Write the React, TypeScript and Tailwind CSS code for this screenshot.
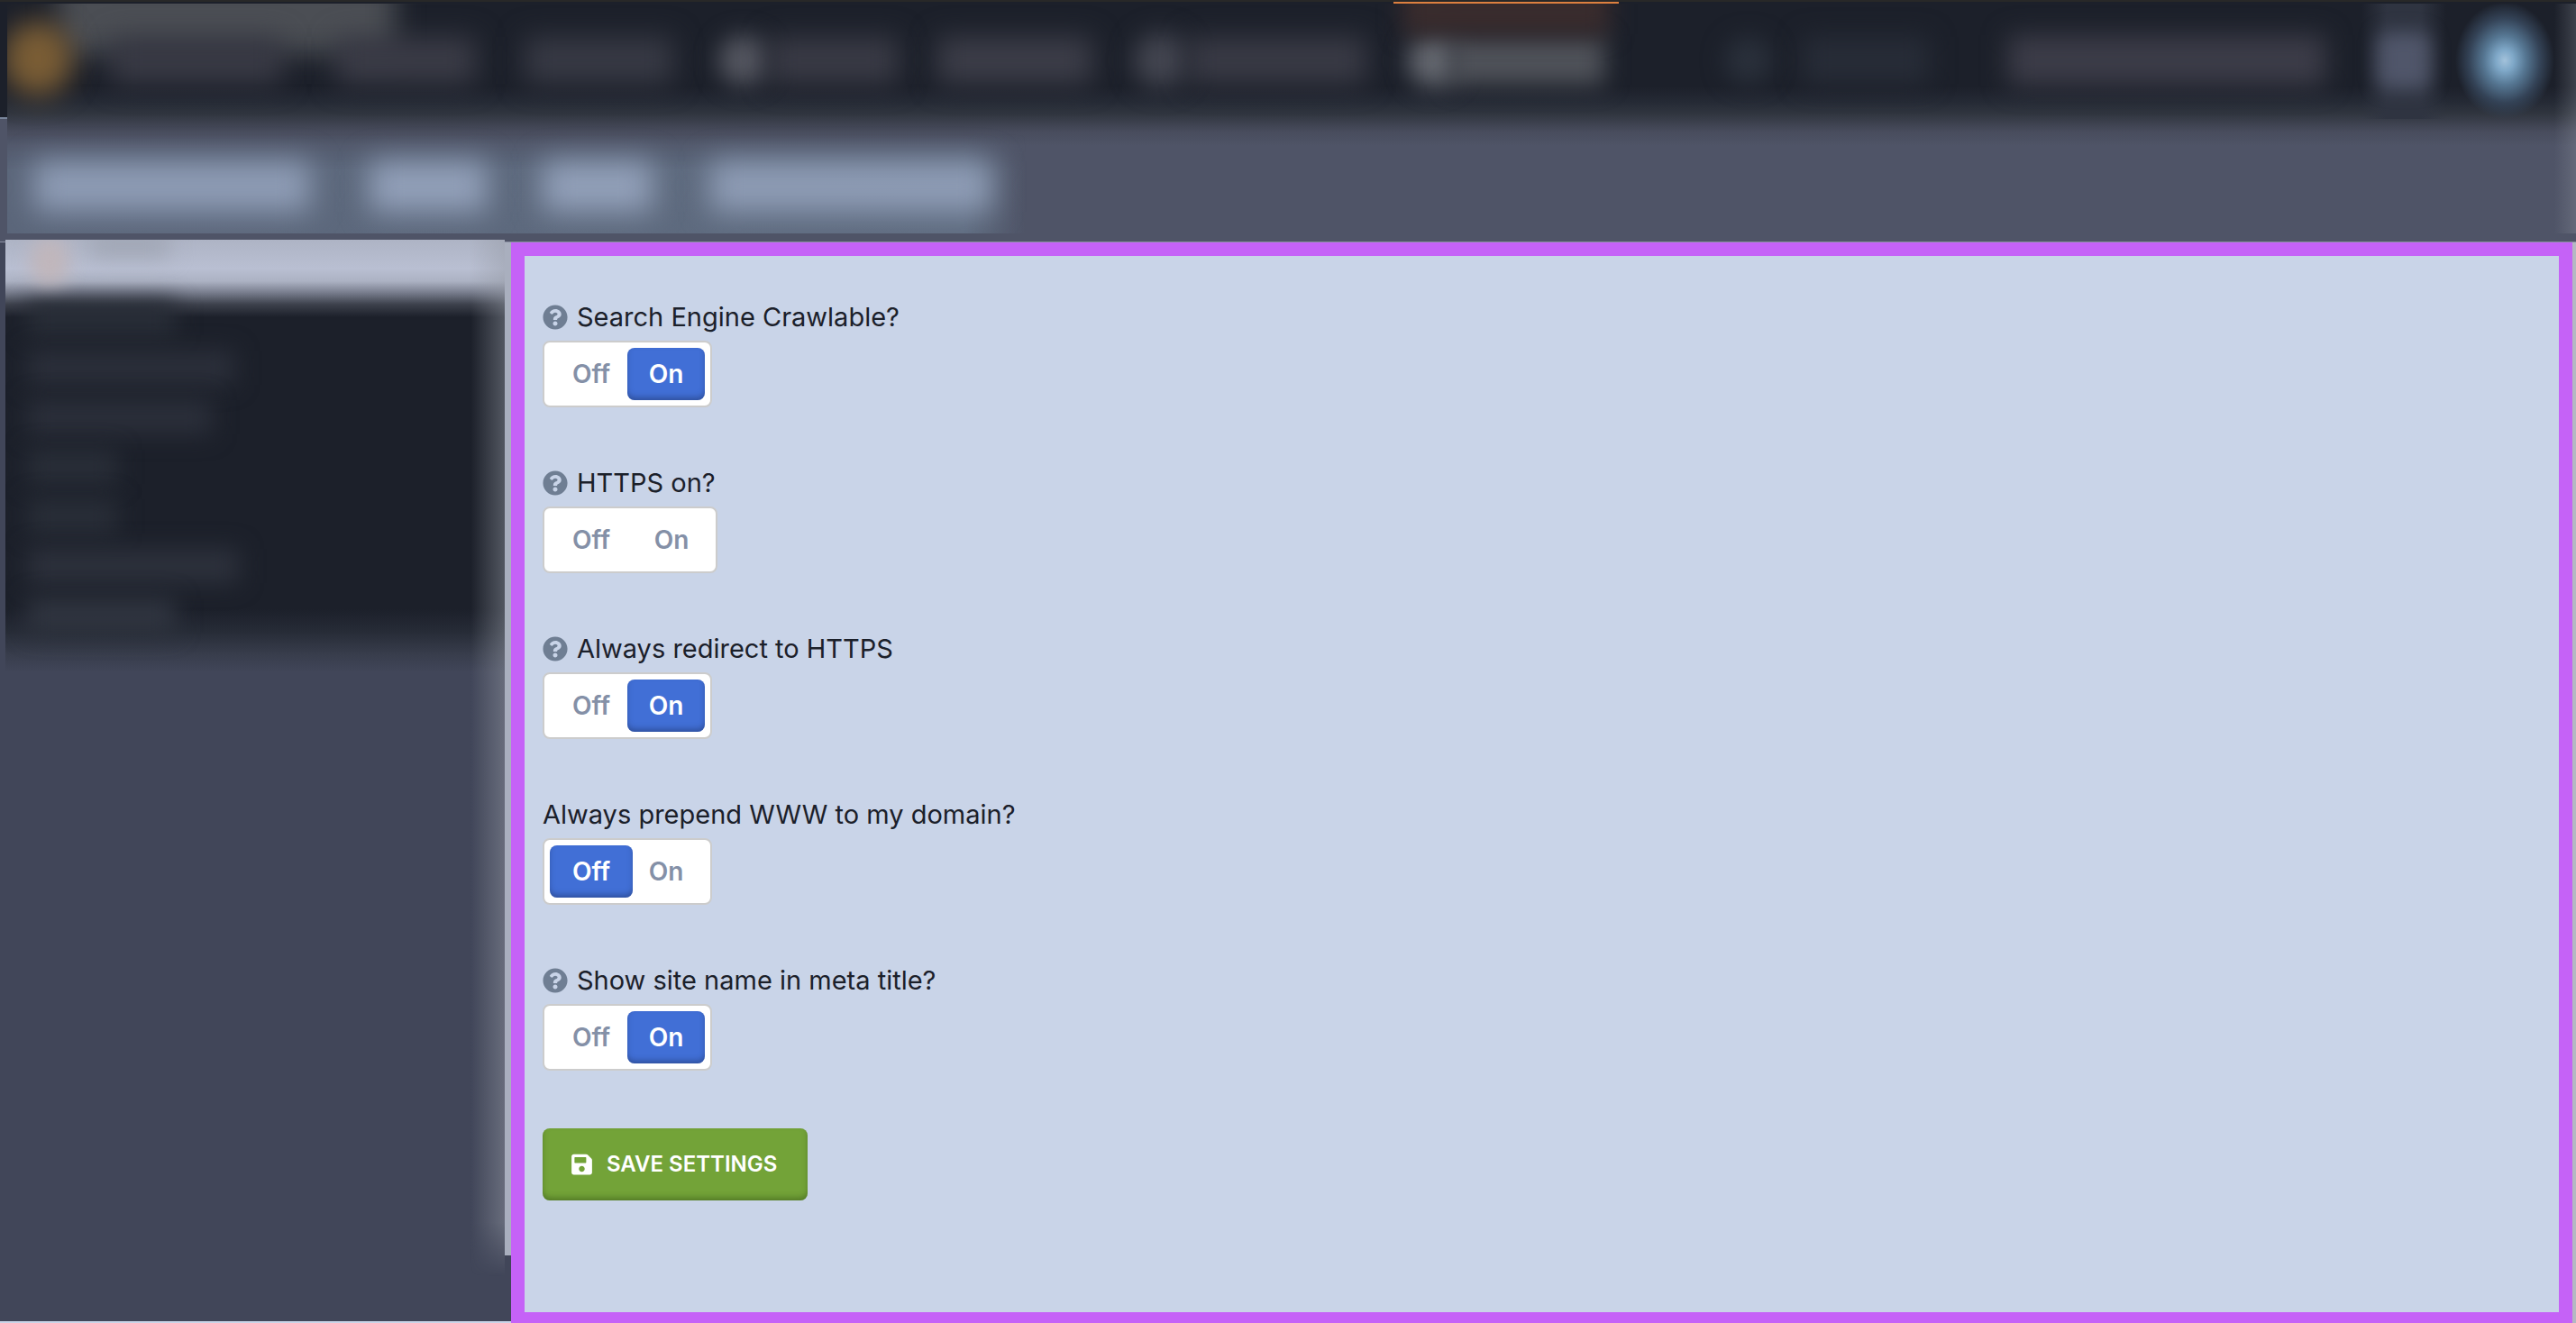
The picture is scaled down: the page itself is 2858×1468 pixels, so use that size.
import { useState } from "react";
import { FaQuestionCircle, FaSave } from "react-icons/fa";

type Choice = "off" | "on" | null;

const settings: { id: string; label: string; help: boolean; initial: Choice }[] = [
  { id: "crawlable", label: "Search Engine Crawlable?", help: true, initial: "on" },
  { id: "https", label: "HTTPS on?", help: true, initial: null },
  { id: "redirect", label: "Always redirect to HTTPS", help: true, initial: "on" },
  { id: "www", label: "Always prepend WWW to my domain?", help: false, initial: "off" },
  { id: "metaTitle", label: "Show site name in meta title?", help: true, initial: "on" },
];

function Option({
  group,
  text,
  checked,
  className,
  onSelect,
}: {
  group: string;
  text: string;
  checked: boolean;
  className: string;
  onSelect: () => void;
}) {
  return (
    <label className={`cursor-pointer ${className}`}>
      <input type="radio" name={group} checked={checked} onChange={onSelect} className="peer sr-only" />
      <span className="flex h-[58px] items-center justify-center rounded-lg text-[28px] font-semibold text-[#8490a7] peer-checked:bg-[#416fd6] peer-checked:text-white peer-checked:shadow-[inset_0_-4px_6px_-1px_rgba(30,50,100,0.5)]">
        {text}
      </span>
    </label>
  );
}

function Setting({ id, label, help, initial }: (typeof settings)[number]) {
  const [value, setValue] = useState<Choice>(initial);
  return (
    <fieldset className="relative">
      <legend className="flex h-9 items-center gap-[10px] text-[29px] text-[#1b202a]">
        {help && <FaQuestionCircle className="size-[28px] text-[#6f7e93]" aria-hidden="true" />}
        {label}
      </legend>
      <div className="mt-2 flex w-fit rounded-lg border-2 border-[#cccccc] bg-white p-1.5">
        <Option group={id} text="Off" checked={value === "off"} className="w-[92px]" onSelect={() => setValue("off")} />
        <Option
          group={id}
          text="On"
          checked={value === "on"}
          className={value === null ? "w-[86px]" : "-ml-1.5 w-[86px]"}
          onSelect={() => setValue("on")}
        />
      </div>
    </fieldset>
  );
}

function Header() {
  return (
    <header className="relative h-[268px] overflow-hidden bg-[#4f5467]">
      <div className="h-[132px] w-2 border-b-2 border-[#79859b] bg-[#1c202a]" />
      <div
        aria-hidden="true"
        className="absolute inset-x-0 top-1 bottom-[9px] left-2 overflow-hidden bg-[linear-gradient(#1c202a_0px,#1c202a_92px,#242934_108px,#30353f_122px,#484c5d_142px,#4f5467_158px)]"
      >
        <div className="absolute top-[-30px] left-[56px] h-[86px] w-[374px] bg-[#4b4e54] blur-[15px]" />
        <div className="absolute top-[20px] left-[-4px] h-[82px] w-[76px] rounded-full bg-[#7a5d35] blur-[15px]" />
        <div className="flex h-[126px] items-center">
          <div className="ml-[115px] h-[52px] w-[190px] bg-[#383944] blur-[15px]" />
          <div className="ml-[60px] h-[52px] w-[155px] bg-[#3a3b46] blur-[15px]" />
          <div className="ml-[54px] h-[52px] w-[165px] bg-[#373944] blur-[15px]" />
          <div className="ml-[50px] size-[56px] rounded-full bg-[#545660] blur-[13px]" />
          <div className="h-[52px] w-[144px] bg-[#393a45] blur-[15px]" />
          <div className="ml-[43px] h-[52px] w-[172px] bg-[#3c3d48] blur-[15px]" />
          <div className="ml-[46px] size-[60px] rounded-full bg-[#444651] blur-[14px]" />
          <div className="h-[52px] w-[198px] bg-[#393a45] blur-[15px]" />
          <div className="ml-[46px] h-[60px] w-[58px] rounded-full bg-[#64676f] blur-[13px]" />
          <div className="-ml-3 h-[54px] w-[172px] bg-[#4f5259] blur-[13px]" />
          <div className="mr-[24px] ml-auto flex items-center">
            <div className="size-[52px] rounded-full bg-[#2a303b] blur-[13px]" />
            <div className="ml-[34px] h-[52px] w-[140px] bg-[#272c37] blur-[14px]" />
            <div className="ml-[88px] h-[56px] w-[352px] bg-[#3c3c48] blur-[14px]" />
            <div className="ml-[40px] flex h-[130px] w-[94px] items-center justify-center bg-[linear-gradient(90deg,transparent,#2f3441_30%,#2f3441_70%,transparent)]">
              <div className="h-[62px] w-[58px] rounded-xl bg-[#50566a] blur-[10px]" />
            </div>
            <div className="ml-[10px] h-[130px] w-[110px] bg-[radial-gradient(closest-side,#a3c2db_0%,#7fa8c8_18%,#567793_42%,#344357_72%,transparent)]" />
          </div>
        </div>
        <div className="absolute top-[-18px] left-[1548px] h-[52px] w-[230px] bg-[#3a2c2d] blur-[13px]" />
        <div className="absolute bottom-0 left-0 h-[110px] w-[1130px] bg-[linear-gradient(90deg,#5b667a,#5f6c80_94%,transparent)] [mask-image:linear-gradient(transparent,#000_40px)]" />
        <div className="absolute inset-x-0 bottom-[24px] flex">
          <div className="ml-[30px] h-[56px] w-[306px] bg-[#8e9cb5] blur-[16px]" />
          <div className="ml-[66px] h-[56px] w-[130px] bg-[#92a0b9] blur-[16px]" />
          <div className="ml-[62px] h-[56px] w-[122px] bg-[#92a0b9] blur-[16px]" />
          <div className="ml-[64px] h-[56px] w-[312px] bg-[#8e9cb5] blur-[16px]" />
        </div>
        <div className="absolute inset-y-0 right-0 w-6 bg-[linear-gradient(90deg,transparent,rgba(160,165,175,0.25))]" />
      </div>
      <div className="absolute inset-x-0 top-0 h-0.5 bg-[#282828]" />
      <div className="absolute top-0.5 right-0 left-0 h-0.5 bg-[#1c202a]">
        <div className="ml-[1546px] h-0.5 w-[250px] bg-[#dd803f]" />
      </div>
    </header>
  );
}

function Sidebar() {
  return (
    <aside aria-hidden="true" className="flex w-[567px] shrink-0 border-b-2 border-[#c9d4e8] bg-[#414659]">
      <div className="relative -mt-[3px] ml-1.5 flex-1 overflow-hidden">
        <div className="h-[480px] bg-[linear-gradient(#aeb4c5_0px,#b9bfd2_32px,#acb2c3_46px,#7b8090_58px,#3c404b_72px,#1c202a_86px,#1c202a_410px,#262b36_434px,#383d4c_460px,#414659_480px)]">
          <div className="flex h-[68px]">
            <div className="-mt-1 ml-[28px] h-[56px] w-[42px] rounded-full bg-[#c0b6bb] blur-[10px]" />
            <div className="-mt-2 ml-[24px] h-[26px] w-[88px] bg-[#9fa5b3] blur-[12px]" />
          </div>
          <div className="flex flex-col gap-[17px] pl-[24px]">
            <div className="h-[38px] w-[165px] bg-[#292e38] blur-[13px]" />
            <div className="h-[38px] w-[230px] bg-[#2b2f3a] blur-[13px]" />
            <div className="h-[38px] w-[205px] bg-[#2b2f3a] blur-[13px]" />
            <div className="h-[38px] w-[100px] bg-[#292e38] blur-[13px]" />
            <div className="h-[38px] w-[100px] bg-[#292e38] blur-[13px]" />
            <div className="h-[38px] w-[235px] bg-[#2d313c] blur-[13px]" />
            <div className="h-[38px] w-[165px] bg-[#303540] blur-[13px]" />
          </div>
        </div>
        <div className="absolute top-0 right-0 h-[1150px] w-[38px] bg-[linear-gradient(90deg,transparent,rgba(150,155,165,0.45))] [mask-image:linear-gradient(#000_1090px,transparent)]" />
      </div>
      <div className="h-[1124px] w-[7px] bg-[#a9afbe]" />
    </aside>
  );
}

export default function App() {
  return (
    <div className="flex min-h-screen flex-col bg-[#414659] font-[Inter,sans-serif]">
      <Header />
      <div className="flex flex-1 border-t border-[#8a90a2]">
        <Sidebar />
        <main className="flex-1 border-[15px] border-b-[12px] border-[#c562f7] bg-[#c9d4e8] px-5 pt-[50px] pb-16">
          <form className="flex flex-col items-start gap-16" onSubmit={(e) => e.preventDefault()}>
            <div className="flex flex-col gap-[66px]">
              {settings.map((s) => (
                <Setting key={s.id} {...s} />
              ))}
            </div>
            <button
              type="submit"
              className="flex h-20 w-[294px] items-center gap-4 rounded-lg bg-[#73a338] px-8 text-[24px] font-semibold whitespace-nowrap text-white shadow-[inset_0_-4px_6px_-1px_rgba(50,80,20,0.5)]"
            >
              <FaSave className="h-[26px] w-[23px]" aria-hidden="true" />
              SAVE SETTINGS
            </button>
          </form>
        </main>
        <div className="w-1 bg-[#b4b8c2]" />
      </div>
    </div>
  );
}
